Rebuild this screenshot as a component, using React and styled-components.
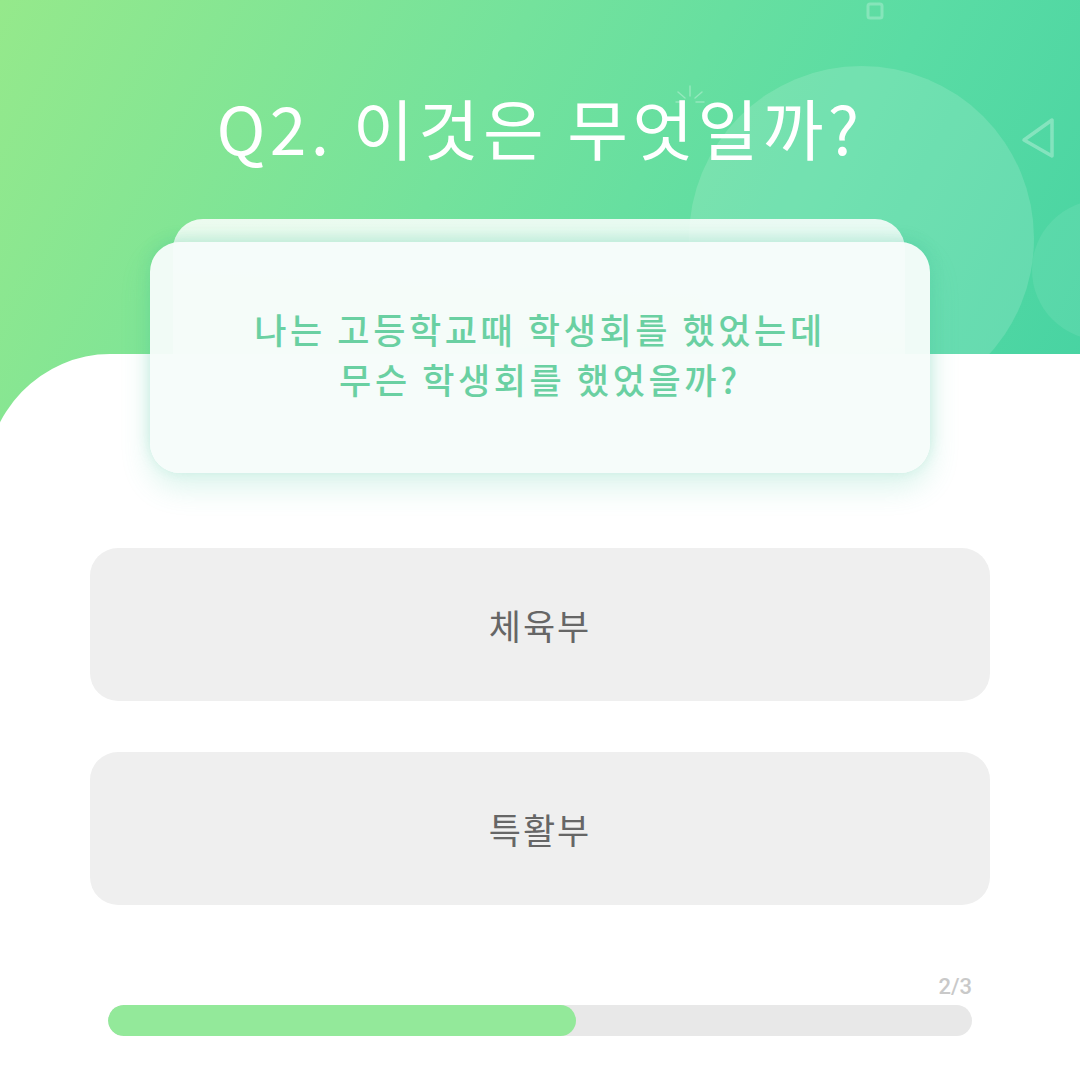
import styled, { createGlobalStyle } from 'styled-components';

const GlobalStyle = createGlobalStyle`
  html, body {
    margin: 0;
    padding: 0;
    background: #ffffff;
  }
  * {
    box-sizing: border-box;
  }
`;

const FONT = `'Noto Sans CJK KR', 'Noto Sans', sans-serif`;

const Page = styled.div`
  position: relative;
  width: 1080px;
  height: 1080px;
  overflow: hidden;
  font-family: ${FONT};
  background-color: #ffffff;
  background-image: linear-gradient(118deg, #95e98b 0%, #74e29c 40%, #5adca4 70%, #45d2a2 100%);
  background-size: 100% 480px;
  background-repeat: no-repeat;
`;

const Hero = styled.header`
  position: relative;
  height: 354px;
  display: flex;
  flex-direction: column;
  align-items: center;
  padding-top: 86px;
`;

const Bubble = styled.div`
  position: absolute;
  border-radius: 50%;
  background: rgba(255, 255, 255, ${(p) => p.$alpha});
  left: ${(p) => p.$x}px;
  top: ${(p) => p.$y}px;
  width: ${(p) => p.$size}px;
  height: ${(p) => p.$size}px;
`;

const Deco = styled.svg`
  position: absolute;
  left: ${(p) => p.$x}px;
  top: ${(p) => p.$y}px;
`;

const Title = styled.h1`
  position: relative;
  margin: 0;
  font-size: 66px;
  line-height: 80px;
  font-weight: 400;
  color: #ffffff;
  letter-spacing: 4.4px;
`;

const Body = styled.main`
  position: relative;
  margin-left: -15px;
  width: calc(100% + 15px);
  height: 726px;
  padding-left: 15px;
  background: #ffffff;
  border-top-left-radius: 125px 130px;
  display: flex;
  flex-direction: column;
`;

const CardStack = styled.section`
  position: relative;
  margin: -135px 150px 0;
  padding-top: 23px;
`;

const BackCard = styled.div`
  position: absolute;
  top: 0;
  left: 23px;
  right: 25px;
  height: 210px;
  border-radius: 30px;
  background: linear-gradient(180deg, rgba(255, 255, 255, 0.85) 0%, rgba(255, 255, 255, 0.6) 100%);
`;

const FrontCard = styled.div`
  position: relative;
  height: 231px;
  border-radius: 30px;
  background: rgba(246, 252, 250, 0.96);
  box-shadow: 0 14px 30px rgba(70, 200, 160, 0.2), 0 -4px 14px rgba(60, 190, 150, 0.22);
  display: flex;
  align-items: center;
  justify-content: center;
  text-align: center;
  padding-bottom: 8px;
`;

const Question = styled.p`
  margin: 0;
  font-size: 35px;
  line-height: 50px;
  font-weight: 500;
  letter-spacing: 3.6px;
  color: #6ad0a2;
`;

const Options = styled.section`
  display: flex;
  flex-direction: column;
  gap: 51px;
  padding: 75px 90px 0;
`;

const Option = styled.button`
  height: 153px;
  border: none;
  border-radius: 28px;
  background: #efefef;
  font-family: ${FONT};
  font-size: 35px;
  font-weight: 400;
  letter-spacing: 2px;
  color: #666666;
  cursor: pointer;
`;

const Progress = styled.section`
  display: flex;
  flex-direction: column;
  align-items: flex-end;
  gap: 6px;
  padding: 70px 108px 0;
`;

const Count = styled.span`
  font-family: Roboto, 'Liberation Sans', sans-serif;
  font-size: 22px;
  line-height: 24px;
  font-weight: 500;
  color: #c9c9c9;
`;

const Track = styled.div`
  width: 100%;
  height: 31px;
  border-radius: 16px;
  background: #e8e8e8;
  overflow: hidden;
`;

const Fill = styled.div`
  height: 100%;
  border-radius: 16px;
  background: #93e99a;
`;

const options = ['체육부', '특활부'];
const current = 2;
const total = 3;
const progress = 54.2;

const App = () => {
  return (
    <>
      <GlobalStyle />
      <Page>
        <Hero>
          <Bubble $x={689} $y={66} $size={345} $alpha={0.14} />
          <Bubble $x={1032} $y={200} $size={140} $alpha={0.08} />
          <Deco $x={866} $y={2} width="18" height="18" viewBox="0 0 18 18">
            <rect x="2" y="2" width="14" height="14" rx="2" fill="none" stroke="rgba(255,255,255,0.25)" strokeWidth="3" />
          </Deco>
          <Deco $x={1018} $y={114} width="40" height="48" viewBox="0 0 40 48">
            <path d="M34 6 L34 42 L6 26 Z" fill="none" stroke="rgba(255,255,255,0.3)" strokeWidth="3.5" strokeLinejoin="round" />
          </Deco>
          <Deco $x={672} $y={82} width="36" height="36" viewBox="0 0 36 36">
            <g stroke="rgba(255,255,255,0.3)" strokeWidth="1.5" strokeLinecap="round">
              <line x1="18" y1="4" x2="18" y2="14" />
              <line x1="6" y1="10" x2="13" y2="16" />
              <line x1="30" y1="10" x2="23" y2="16" />
              <line x1="4" y1="20" x2="12" y2="20" />
              <line x1="24" y1="20" x2="32" y2="20" />
            </g>
          </Deco>
          <Title>Q2. 이것은 무엇일까?</Title>
        </Hero>
        <Body>
          <CardStack>
            <BackCard />
            <FrontCard>
              <Question>
                나는 고등학교때 학생회를 했었는데
                <br />
                무슨 학생회를 했었을까?
              </Question>
            </FrontCard>
          </CardStack>
          <Options>
            {options.map((label) => (
              <Option key={label}>{label}</Option>
            ))}
          </Options>
          <Progress>
            <Count>
              {current}/{total}
            </Count>
            <Track>
              <Fill style={{ width: `${progress}%` }} />
            </Track>
          </Progress>
        </Body>
      </Page>
    </>
  );
};

export default App;
